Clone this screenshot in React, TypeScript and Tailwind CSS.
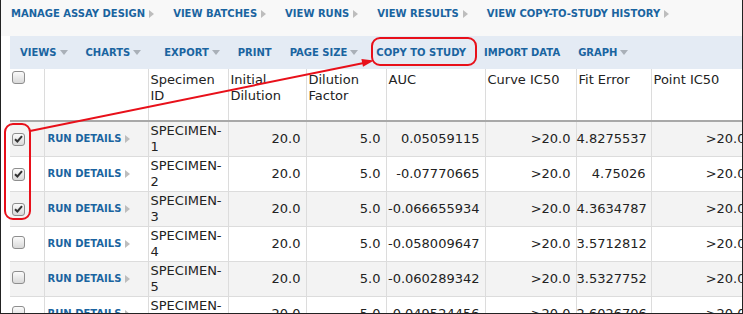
import React from "react";

const blue = "text-[#1a64a0]";

const NavArrow = () => (
  <svg width="5" height="8" viewBox="0 0 5 8" className="ml-[4px] shrink-0">
    <path d="M0 0 L5 4 L0 8 Z" fill="#bdbdbd" />
  </svg>
);

const DownArrow = () => (
  <svg width="8" height="5" viewBox="0 0 8 5" className="ml-[3px] shrink-0">
    <path d="M0 0 L8 0 L4 5 Z" fill="#a9b0b8" />
  </svg>
);

const Check = ({ checked }: { checked?: boolean }) => (
  <span className="inline-flex w-[13px] h-[13px] rounded-[3px] border border-[#8e8e8e] bg-linear-to-b from-[#fbfbfb] to-[#d9d9d9] items-center justify-center">
    {checked && (
      <svg width="9" height="8" viewBox="0 0 9 8">
        <path d="M1 4.2 L3.4 6.5 L8 1.2" stroke="#333" strokeWidth="2" fill="none" />
      </svg>
    )}
  </span>
);

const navItems = [
  "MANAGE ASSAY DESIGN",
  "VIEW BATCHES",
  "VIEW RUNS",
  "VIEW RESULTS",
  "VIEW COPY-TO-STUDY HISTORY",
];

const toolItems = [
  { label: "VIEWS", menu: true },
  { label: "CHARTS", menu: true },
  { label: "EXPORT", menu: true },
  { label: "PRINT" },
  { label: "PAGE SIZE", menu: true },
  { label: "COPY TO STUDY" },
  { label: "IMPORT DATA" },
  { label: "GRAPH", menu: true },
];

const rows = [
  { id: 1, auc: "0.05059115", fit: "4.8275537", checked: true },
  { id: 2, auc: "-0.07770665", fit: "4.75026", checked: true },
  { id: 3, auc: "-0.066655934", fit: "4.3634787", checked: true },
  { id: 4, auc: "-0.058009647", fit: "3.5712812" },
  { id: 5, auc: "-0.060289342", fit: "3.5327752" },
  { id: 6, auc: "-0.049524456", fit: "2.6026706" },
];

const widths = [34, 104, 80, 78, 80, 99, 91, 75, 100];

export default function App() {
  return (
    <div className="relative w-[743px] h-[314px] overflow-hidden bg-white border-x border-b border-[#222] font-['DejaVu_Sans',Verdana,sans-serif]">
      {/* breadcrumb nav */}
      <div className="h-[36px] bg-[#f8f8f8] flex items-start pt-[8px] pl-[10px] gap-[19px]">
        {navItems.map((item) => (
          <div key={item} className="flex items-center">
            <span className={`text-[10px] leading-[12px] font-bold ${blue}`}>{item}</span>
            <NavArrow />
          </div>
        ))}
      </div>

      <div className="pl-[9px]">
        {/* grid toolbar */}
        <div className="h-[33px] bg-[#e4ebf4] flex items-center pl-[10px]">
          {toolItems.map((t, i) => (
            <div
              key={t.label}
              className={`flex items-center ${i === 0 ? "" : i === 2 ? "ml-[23px]" : "ml-[18px]"}`}
            >
              <span className={`text-[10px] leading-[12px] font-bold ${blue}`}>{t.label}</span>
              {t.menu && <DownArrow />}
            </div>
          ))}
        </div>

        <div className="overflow-hidden">
          <table className="table-fixed border-collapse w-[741px] text-[13px] leading-[16px] text-[#222]">
            <colgroup>
              {widths.map((w, i) => (
                <col key={i} style={{ width: w }} />
              ))}
            </colgroup>
            <thead>
              <tr className="h-[52px] align-top">
                <th className="border-r border-b-2 border-[#dcdcdc] border-b-[#a8a8a8] pl-[2px] pt-[2px] text-left font-normal">
                  <Check />
                </th>
                <th className="border-x border-b-2 border-[#dcdcdc] border-b-[#a8a8a8]" />
                {["Specimen ID", "Initial Dilution", "Dilution Factor", "AUC", "Curve IC50", "Fit Error", "Point IC50"].map((h) => (
                  <th
                    key={h}
                    className="border-x border-b-2 border-[#dcdcdc] border-b-[#a8a8a8] pl-[2px] pr-[4px] pt-[3px] text-left font-normal"
                  >
                    {h}
                  </th>
                ))}
              </tr>
            </thead>
            <tbody>
              {rows.map((r) => (
                <tr key={r.id} className={`h-[35px] ${r.id % 2 === 1 ? "bg-[#f3f3f3]" : "bg-white"}`}>
                  <td className="border-r border-b border-[#dcdcdc] pl-[2px] align-middle">
                    <Check checked={r.checked} />
                  </td>
                  <td className="border-x border-b border-[#dcdcdc] pl-[3px] align-middle">
                    <span className="flex items-center">
                      <span className={`text-[10px] leading-[12px] font-bold ${blue}`}>RUN DETAILS</span>
                      <NavArrow />
                    </span>
                  </td>
                  <td className="border-x border-b border-[#dcdcdc] pl-[2px] py-[1px] align-middle">
                    SPECIMEN-{r.id}
                  </td>
                  <td className="border-x border-b border-[#dcdcdc] pr-[5px] text-right align-middle">20.0</td>
                  <td className="border-x border-b border-[#dcdcdc] pr-[5px] text-right align-middle">5.0</td>
                  <td className="border-x border-b border-[#dcdcdc] pr-[5px] text-right align-middle">{r.auc}</td>
                  <td className="border-x border-b border-[#dcdcdc] pr-[5px] text-right align-middle">&gt;20.0</td>
                  <td className="border-x border-b border-[#dcdcdc] pr-[5px] text-right align-middle">{r.fit}</td>
                  <td className="border-x border-b border-[#dcdcdc] pr-[5px] text-right align-middle">&gt;20.0</td>
                </tr>
              ))}
            </tbody>
          </table>
        </div>
      </div>

      {/* red annotation overlay */}
      <svg className="absolute left-0 top-0 pointer-events-none" width="743" height="314">
        <rect x="4" y="124" width="25" height="95" rx="8" fill="none" stroke="#e8101a" strokeWidth="2" />
        <rect x="371" y="38" width="104" height="27" rx="8" fill="none" stroke="#e8101a" strokeWidth="2" />
        <line x1="29" y1="131" x2="364" y2="62.7" stroke="#e8101a" strokeWidth="2" />
        <polygon points="373,60.5 360.4,59 362,66.8" fill="#e8101a" />
      </svg>
    </div>
  );
}
